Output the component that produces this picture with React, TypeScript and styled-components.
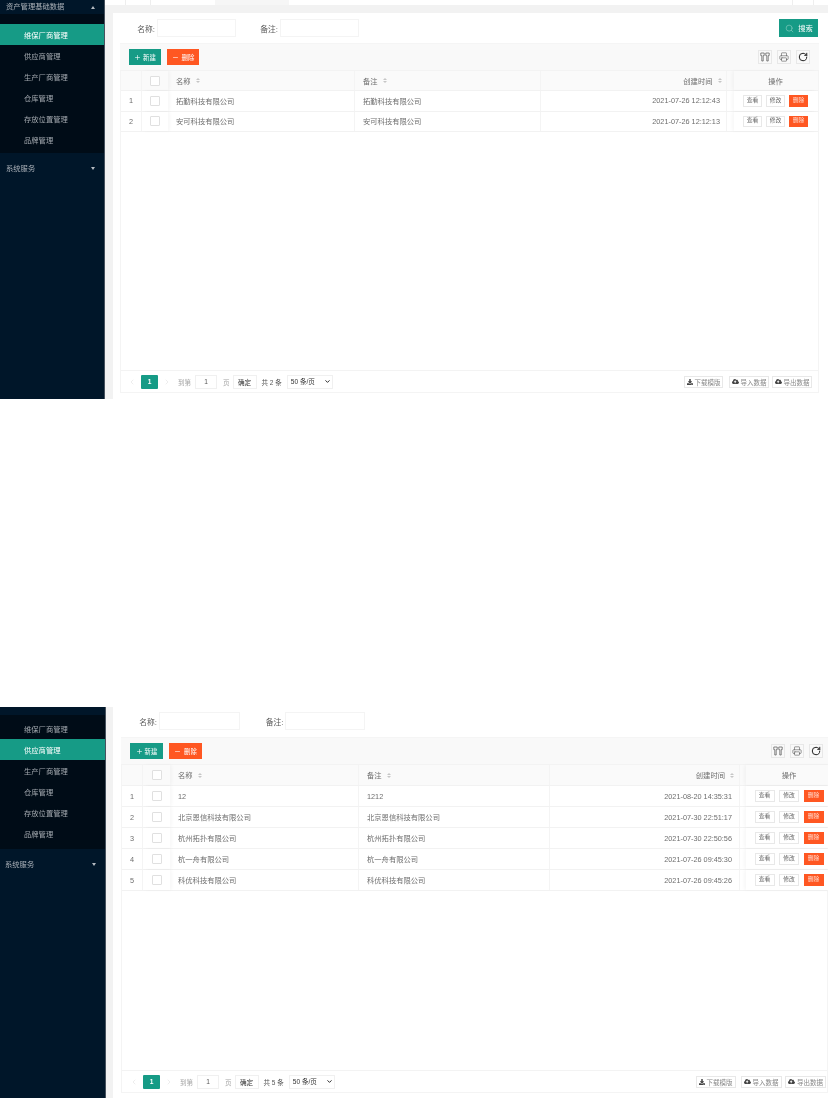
import React from 'react';
import styled, { createGlobalStyle } from 'styled-components';
import { Plus, Minus, Search, Printer, RotateCw, ChevronLeft, ChevronRight, ChevronDown } from 'lucide-react';
import { FaCloudUploadAlt, FaDownload } from 'react-icons/fa';

const Global = createGlobalStyle`
  html, body { margin: 0; padding: 0; background: #fff; }
  * { box-sizing: border-box; }
  body { font-family: "Liberation Sans", "Noto Sans CJK SC", sans-serif; font-size: 7.3px; color: #6e6e6e; }
`;

const Page = styled.div`
  width: 828px; height: 1098px; display: flex; flex-direction: column; justify-content: space-between; overflow: hidden;
`;
const Shot = styled.section<{ $h: number }>`
  height: ${p => p.$h}px; display: flex; overflow: hidden; filter: blur(0.35px);
`;
const Sidebar = styled.aside<{ $w: number; $pad: number }>`
  width: ${p => p.$w}px; flex: none; background: #001629; border-right: 1px solid #47525e; padding-top: ${p => p.$pad}px;
`;
const GroupTitle = styled.div<{ $h: number; $x: number }>`
  height: ${p => p.$h}px; padding: 0 9px 0 ${p => p.$x}px; display: flex; align-items: center; justify-content: space-between; color: #aab1b8; line-height: 1;
`;
const Caret = styled.span<{ $up?: boolean }>`
  width: 0; height: 0; border-left: 2.5px solid transparent; border-right: 2.5px solid transparent;
  ${p => p.$up ? 'border-bottom: 3px solid #b5bbc1;' : 'border-top: 3px solid #b5bbc1;'}
`;
const SubMenu = styled.div<{ $pt: number; $pb: number }>`
  background: #000c17; padding: ${p => p.$pt}px 0 ${p => p.$pb}px;
`;
const SubItem = styled.div<{ $active?: boolean }>`
  height: 21px; padding-left: 24px; display: flex; align-items: center;
  color: ${p => p.$active ? '#fff' : '#a1a8ae'}; background: ${p => p.$active ? '#169b86' : 'transparent'};
`;
const Main = styled.main`
  flex: 1; min-width: 0; display: flex; flex-direction: column; background: #f2f2f2;
`;
const TabBar = styled.div`
  height: 5px; flex: none; background: #fff; margin-bottom: 8px; display: flex;
`;
const TabCell = styled.span<{ $w: number; $fill?: boolean; $line?: boolean }>`
  width: ${p => p.$w}px; flex: none; background: ${p => p.$fill ? '#f6f6f6' : '#fff'}; border-left: ${p => p.$line ? '1px solid #eee' : '0'};
`;
const Card = styled.div<{ $l: number; $r: number; $t: number; $b: number; $ml: number }>`
  flex: 1; min-height: 0; margin-left: ${p => p.$ml}px; background: #fff; display: flex; flex-direction: column;
  padding: ${p => p.$t}px ${p => p.$r}px ${p => p.$b}px ${p => p.$l}px;
`;
const Filter = styled.div<{ $mb: number }>`
  height: 18px; flex: none; display: flex; align-items: center; margin-bottom: ${p => p.$mb}px; padding-right: 1px;
`;
const FieldLabel = styled.label<{ $w: number }>`
  width: ${p => p.$w}px; flex: none; text-align: right; color: #5a5a5a; margin-right: 1.5px; font-size: 7.8px;
`;
const FieldInput = styled.input<{ $w: number }>`
  width: ${p => p.$w}px; height: 18px; flex: none; border: 1px solid #f4f4f4; background: #fff; padding: 0; outline: 0;
`;
const SearchButton = styled.button`
  margin-left: auto; width: 39px; height: 18px; border: 0; padding: 0 0 0 1px; background: #169b86; color: #fff; font: inherit;
  display: flex; align-items: center; justify-content: center; gap: 4px;
  svg { color: #9fd6cc; }
`;
const TableBox = styled.div`
  flex: 1; min-height: 0; display: flex; flex-direction: column; border: 1px solid #f4f4f4; border-top: 0;
`;
const Toolbar = styled.div<{ $pr: number }>`
  height: 28px; flex: none; background: #f9f9f9; border-top: 1px solid #f5f5f5; border-bottom: 1px solid #f3f3f3;
  margin: 0 -1px; display: flex; align-items: center; padding: 0 ${p => p.$pr}px 0 9px; gap: 6px;
`;
const ToolButton = styled.button<{ $tone: 'teal' | 'red'; $w: number; $gap: number }>`
  width: ${p => p.$w}px; height: 16px; border: 0; padding: 0; color: #fff; font: inherit; font-size: 6.4px;
  background: ${p => p.$tone === 'teal' ? '#169b86' : '#ff5722'};
  display: flex; align-items: center; justify-content: center; gap: ${p => p.$gap}px;
`;
const IconGroup = styled.div<{ $gap: number }>`
  margin-left: auto; display: flex; gap: ${p => p.$gap}px;
`;
const IconBox = styled.span<{ $dark?: boolean }>`
  width: 14px; height: 14px; border: 1px solid #e8e8e8; display: flex; align-items: center; justify-content: center;
  color: ${p => p.$dark ? '#222' : '#555'};
`;
const Row = styled.div<{ $cols: string; $head?: boolean; $h: number }>`
  height: ${p => p.$h}px; flex: none; display: grid; grid-template-columns: ${p => p.$cols};
  background: ${p => p.$head ? '#fafafa' : '#fff'}; border-bottom: 1px solid #f2f2f2;
`;
const Cell = styled.div<{ $end?: boolean; $center?: boolean; $line?: boolean; $shadow?: 'l' | 'r'; $px?: number }>`
  display: flex; align-items: center; min-width: 0; white-space: nowrap; padding: 0 ${p => p.$px ?? 6}px;
  justify-content: ${p => p.$end ? 'flex-end' : p.$center ? 'center' : 'flex-start'};
  border-right: ${p => p.$line ? '1px solid #f4f4f4' : '0'};
  box-shadow: ${p => p.$shadow === 'l' ? '-2px 0 3px rgba(0,0,0,.03)' : p.$shadow === 'r' ? '2px 0 3px rgba(0,0,0,.03)' : 'none'};
  position: ${p => p.$shadow ? 'relative' : 'static'};
  background: inherit;
`;
const Check = styled.span`
  width: 10px; height: 10px; border: 1px solid #e0e0e0; background: #fff; border-radius: 1px;
`;
const Sort = styled.span`
  display: inline-flex; flex-direction: column; gap: 1px; margin-left: 5px;
  &::before { content: ""; border-left: 2.5px solid transparent; border-right: 2.5px solid transparent; border-bottom: 2.5px solid #c6c6c6; }
  &::after { content: ""; border-left: 2.5px solid transparent; border-right: 2.5px solid transparent; border-top: 2.5px solid #c6c6c6; }
`;
const Ops = styled.div<{ $gap: number }>`
  display: flex; gap: ${p => p.$gap}px; align-items: center;
`;
const OpButton = styled.button<{ $red?: boolean; $w: number }>`
  width: ${p => p.$w}px; height: 11.5px; padding: 0; font: inherit; font-size: 5.8px; line-height: 1;
  border: 1px solid ${p => p.$red ? '#ff5722' : '#e8e8e8'};
  background: ${p => p.$red ? '#ff5722' : '#fff'}; color: ${p => p.$red ? '#ffd9cc' : '#666'};
`;
const Body = styled.div`
  flex: 1; min-height: 0;
`;
const Footer = styled.div<{ $pl: number; $pr: number }>`
  height: 22px; flex: none; border-top: 1px solid #f3f3f3; display: flex; align-items: center; padding: 0 ${p => p.$pr}px 0 ${p => p.$pl}px; font-size: 6.6px;
`;
const Arrow = styled.span<{ $ml: number; $w: number }>`
  width: ${p => p.$w}px; margin-left: ${p => p.$ml}px; flex: none; display: flex; justify-content: center; color: #c9c9c9;
`;
const PageNo = styled.span<{ $w: number }>`
  width: ${p => p.$w}px; height: 14px; flex: none; background: #169b86; color: #fff; border-radius: 1px;
  display: flex; align-items: center; justify-content: center; margin-left: 5px; font-weight: 700;
`;
const PagerText = styled.span<{ $ml: number; $dim?: boolean }>`
  margin-left: ${p => p.$ml}px; flex: none; color: ${p => p.$dim ? '#a5a5a5' : '#555'}; font-size: 6.5px;
`;
const JumpInput = styled.input`
  width: 22px; height: 14px; margin-left: 4px; flex: none; border: 1px solid #f0f0f0; text-align: center; font: inherit; color: #555; padding: 0;
`;
const Confirm = styled.button`
  width: 24px; height: 14px; margin-left: 3px; flex: none; border: 1px solid #f0f0f0; background: #fff; color: #333; font: inherit; padding: 0;
`;
const SizeWrap = styled.span`
  position: relative; width: 46px; height: 14px; margin-left: 5px; flex: none; display: block;
  svg { position: absolute; right: 1.5px; top: 3.5px; color: #111; pointer-events: none; }
`;
const PageSize = styled.select`
  appearance: none; width: 100%; height: 100%; display: block; border: 1px solid #f0f0f0; background: #fff; color: #333; font: inherit; padding: 0 0 0 3px; outline: 0;
`;
const FooterRight = styled.div`
  margin-left: auto; display: flex;
`;
const DataButton = styled.button<{ $w: number; $ml?: number }>`
  width: ${p => p.$w}px; height: 12px; margin-left: ${p => p.$ml ?? 0}px; border: 1px solid #e8e8e8; background: #fff; color: #888; font: inherit; font-size: 6.5px; padding: 0;
  display: flex; align-items: center; justify-content: center; gap: 2px;
  svg { color: #444; }
`;

const ColumnsIcon = () => (
  <svg width="10" height="10" viewBox="0 0 10 10" fill="none" stroke="#555" strokeWidth="0.7">
    <path d="M0.8 1h3.4v2.6H3.2V9H1.8V3.6h-1zM5.8 1h3.4v2.6h-1V9H6.8V3.6h-1z" />
  </svg>
);

type Rec = { name: string; note?: string; time: string };

type Conf = {
  h: number; sideW: number; sidePad: number; titleH: number; titleX: number; showTop: boolean; subPt: number; subPb: number; active: number;
  cardMl: number; pl: number; pr: number; pt: number; pb: number; filterMb: number;
  labelW: number[]; inputW: number[]; search: boolean; cols: string; headH: number; rowH: number;
  btnW: number; iconGap: number; toolPr: number; opW: number; opGap: number; pageW: number; total: number;
  footPl: number; footPr: number;
  dataW: number[]; dataGap: number[]; recs: Rec[]; headPad: number; timePad: number;
};

const menu = ['维保厂商管理', '供应商管理', '生产厂商管理', '仓库管理', '存放位置管理', '品牌管理'];

const Screen = ({ c }: { c: Conf }) => (
  <Shot $h={c.h}>
    <Sidebar $w={c.sideW} $pad={c.sidePad}>
      {c.showTop && (
        <GroupTitle $h={14} $x={c.titleX}>资产管理基础数据<Caret $up /></GroupTitle>
      )}
      <SubMenu $pt={c.subPt} $pb={c.subPb}>
        {menu.map((m, i) => <SubItem key={m} $active={i === c.active}>{m}</SubItem>)}
      </SubMenu>
      <GroupTitle $h={c.titleH} $x={c.titleX}>系统服务<Caret /></GroupTitle>
    </Sidebar>
    <Main>
      {c.search && (
        <TabBar>
          <TabCell $w={20} />
          <TabCell $w={25} $line />
          <TabCell $w={65} $line />
          <TabCell $w={74} $fill />
          <TabCell $w={503} />
          <TabCell $w={21} $line />
          <TabCell $w={14} $line />
        </TabBar>
      )}
      <Card $l={c.pl} $r={c.pr} $t={c.pt} $b={c.pb} $ml={c.cardMl}>
        <Filter $mb={c.filterMb}>
          <FieldLabel $w={c.labelW[0]}>名称:</FieldLabel>
          <FieldInput $w={c.inputW[0]} />
          <FieldLabel $w={c.labelW[1]}>备注:</FieldLabel>
          <FieldInput $w={c.inputW[1]} />
          {c.search && <SearchButton><Search size={9} strokeWidth={1.4} />搜索</SearchButton>}
        </Filter>
        <TableBox>
          <Toolbar $pr={c.toolPr}>
            <ToolButton $tone="teal" $w={c.btnW} $gap={2}><Plus size={7} strokeWidth={2} />新建</ToolButton>
            <ToolButton $tone="red" $w={c.btnW} $gap={3}><Minus size={7} strokeWidth={2} />删除</ToolButton>
            <IconGroup $gap={c.iconGap}>
              <IconBox><ColumnsIcon /></IconBox>
              <IconBox><Printer size={10} strokeWidth={1.4} /></IconBox>
              <IconBox $dark><RotateCw size={10} strokeWidth={2.4} /></IconBox>
            </IconGroup>
          </Toolbar>
          <Row $cols={c.cols} $head $h={c.headH}>
            <Cell $line />
            <Cell $center $shadow="r"><Check /></Cell>
            <Cell $line $px={8}>名称<Sort /></Cell>
            <Cell $line $px={8}>备注<Sort /></Cell>
            <Cell $end $line $px={c.headPad}>创建时间<Sort /></Cell>
            <Cell $px={0} />
            <Cell $center $shadow="l">操作</Cell>
          </Row>
          {c.recs.map((r, i) => (
            <Row key={r.time} $cols={c.cols} $h={c.rowH}>
              <Cell $center $line>{i + 1}</Cell>
              <Cell $center $shadow="r"><Check /></Cell>
              <Cell $line $px={8}>{r.name}</Cell>
              <Cell $line $px={8}>{r.note ?? r.name}</Cell>
              <Cell $end $line $px={c.timePad}>{r.time}</Cell>
              <Cell $px={0} />
              <Cell $center $shadow="l" $px={0}>
                <Ops $gap={c.opGap}>
                  <OpButton $w={c.opW}>查看</OpButton>
                  <OpButton $w={c.opW}>修改</OpButton>
                  <OpButton $w={c.opW} $red>删除</OpButton>
                </Ops>
              </Cell>
            </Row>
          ))}
          <Body />
          <Footer $pl={c.footPl} $pr={c.footPr}>
            <Arrow $ml={0} $w={8}><ChevronLeft size={8} strokeWidth={1} /></Arrow>
            <PageNo $w={c.pageW}>1</PageNo>
            <Arrow $ml={5} $w={8}><ChevronRight size={8} strokeWidth={1} /></Arrow>
            <PagerText $ml={7} $dim>到第</PagerText>
            <JumpInput defaultValue="1" />
            <PagerText $ml={6} $dim>页</PagerText>
            <Confirm>确定</Confirm>
            <PagerText $ml={5}>共 {c.total} 条</PagerText>
            <SizeWrap>
              <PageSize defaultValue="50"><option value="50">50 条/页</option></PageSize>
              <ChevronDown size={7} strokeWidth={3} />
            </SizeWrap>
            <FooterRight>
              <DataButton $w={c.dataW[0]}><FaDownload size={6} />下载模版</DataButton>
              <DataButton $w={c.dataW[1]} $ml={c.dataGap[0]}><FaCloudUploadAlt size={7} />导入数据</DataButton>
              <DataButton $w={c.dataW[2]} $ml={c.dataGap[1]}><FaCloudUploadAlt size={7} />导出数据</DataButton>
            </FooterRight>
          </Footer>
        </TableBox>
      </Card>
    </Main>
  </Shot>
);

const first: Conf = {
  h: 399, sideW: 105, sidePad: 0, titleH: 31, titleX: 6, showTop: true, subPt: 10, subPb: 3, active: 0,
  cardMl: 8, pl: 7, pr: 9, pt: 6, pb: 6, filterMb: 6,
  labelW: [35, 42.5], inputW: [79, 79], search: true,
  cols: '21px 26px 187px 186px 186px 7px 83px', headH: 20, rowH: 20.5,
  btnW: 32, iconGap: 5, toolPr: 9, opW: 19, opGap: 4, pageW: 17, total: 2,
  footPl: 7, footPr: 6,
  dataW: [39, 40, 40], dataGap: [6, 3], headPad: 4.5, timePad: 6,
  recs: [
    { name: '拓勤科技有限公司', time: '2021-07-26 12:12:43' },
    { name: '安可科技有限公司', time: '2021-07-26 12:12:13' },
  ],
};

const second: Conf = {
  h: 391, sideW: 106, sidePad: 8, titleH: 31, titleX: 5, showTop: false, subPt: 3, subPb: 5, active: 1,
  cardMl: 7, pl: 8, pr: 0, pt: 5, pb: 5, filterMb: 7,
  labelW: [36, 44], inputW: [81, 80], search: false,
  cols: '21px 27px 189px 191px 190px 6px 86px', headH: 21, rowH: 21,
  btnW: 33, iconGap: 5, toolPr: 5, opW: 20, opGap: 4.5, pageW: 17, total: 5,
  footPl: 8, footPr: 1,
  dataW: [40, 41, 41], dataGap: [5, 3.5], headPad: 5, timePad: 7,
  recs: [
    { name: '12', note: '1212', time: '2021-08-20 14:35:31' },
    { name: '北京恩信科技有限公司', time: '2021-07-30 22:51:17' },
    { name: '杭州拓扑有限公司', time: '2021-07-30 22:50:56' },
    { name: '杭一舟有限公司', time: '2021-07-26 09:45:30' },
    { name: '科优科技有限公司', time: '2021-07-26 09:45:26' },
  ],
};

export default function App() {
  return (
    <Page>
      <Global />
      <Screen c={first} />
      <Screen c={second} />
    </Page>
  );
}
